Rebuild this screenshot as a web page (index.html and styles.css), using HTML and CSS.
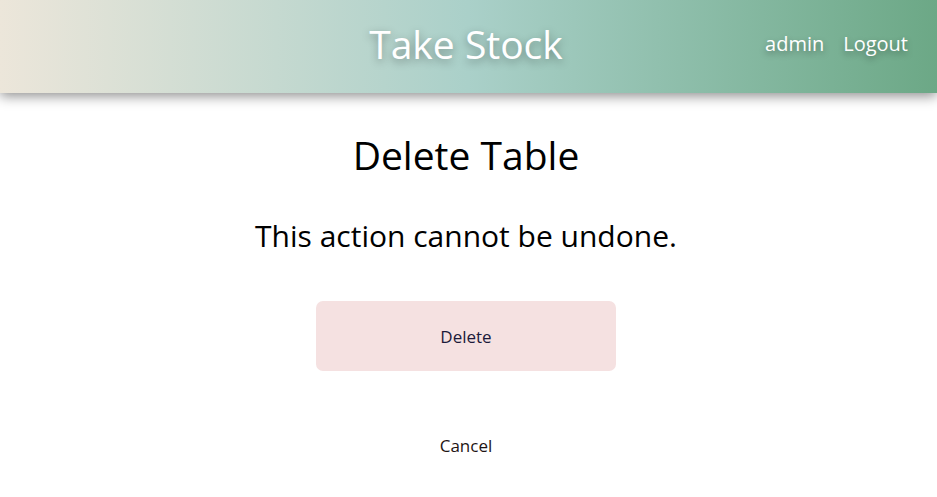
FILE: index.html
```html
<!DOCTYPE html>
<html>
<head>
<meta charset="utf-8">
<link rel="stylesheet" href="styles.css">
</head>
<body>
<header class="topbar">
  <div class="spacer"></div>
  <h1 class="brand">Take Stock</h1>
  <nav class="nav">
    <a href="#">admin</a>
    <a href="#">Logout</a>
  </nav>
</header>
<main class="content">
  <h2 class="title">Delete Table</h2>
  <p class="warning">This action cannot be undone.</p>
  <button class="btn-delete">Delete</button>
  <a class="cancel" href="#">Cancel</a>
</main>
</body>
</html>
```

FILE: styles.css
```css
* { box-sizing: border-box; }
html, body { margin: 0; padding: 0; background: #fff; }
body {
  font-family: "Open Sans", "Noto Sans", sans-serif;
  color: #000;
}
.topbar {
  height: 93px;
  display: grid;
  grid-template-columns: 1fr auto 1fr;
  align-items: center;
  padding-right: 5px;
  padding-bottom: 6px;
  background: linear-gradient(90deg, #ece6da 0%, #aad0c9 50%, #6ca886 100%);
  box-shadow: 0 3px 12px rgba(0,0,0,0.45);
  position: relative;
}
.brand {
  margin: 0;
  font-weight: 400;
  font-size: 39px;
  color: #fff;
  text-shadow: 0 3px 8px rgba(0,0,0,0.35);
}
.nav {
  justify-self: end;
  display: flex;
  gap: 19px;
  padding-right: 24px;
}
.nav a {
  color: #fff;
  text-decoration: none;
  font-size: 20px;
  text-shadow: 0 3px 6px rgba(0,0,0,0.35);
}
.content {
  display: flex;
  flex-direction: column;
  align-items: center;
  padding-right: 5px;
}
.title {
  margin: 34px 0 0;
  font-weight: 400;
  font-size: 39px;
  line-height: 56px;
}
.warning {
  margin: 31px 0 0;
  font-size: 30px;
  font-weight: 400;
  line-height: 44px;
}
.btn-delete {
  margin-top: 43px;
  width: 300px;
  height: 70px;
  border: none;
  border-radius: 7px;
  background: #f5e1e1;
  color: #1c1a3a;
  font-family: inherit;
  font-size: 17px;
}
.cancel {
  margin-top: 63px;
  color: #1e1414;
  text-decoration: none;
  font-size: 17px;
}
```
